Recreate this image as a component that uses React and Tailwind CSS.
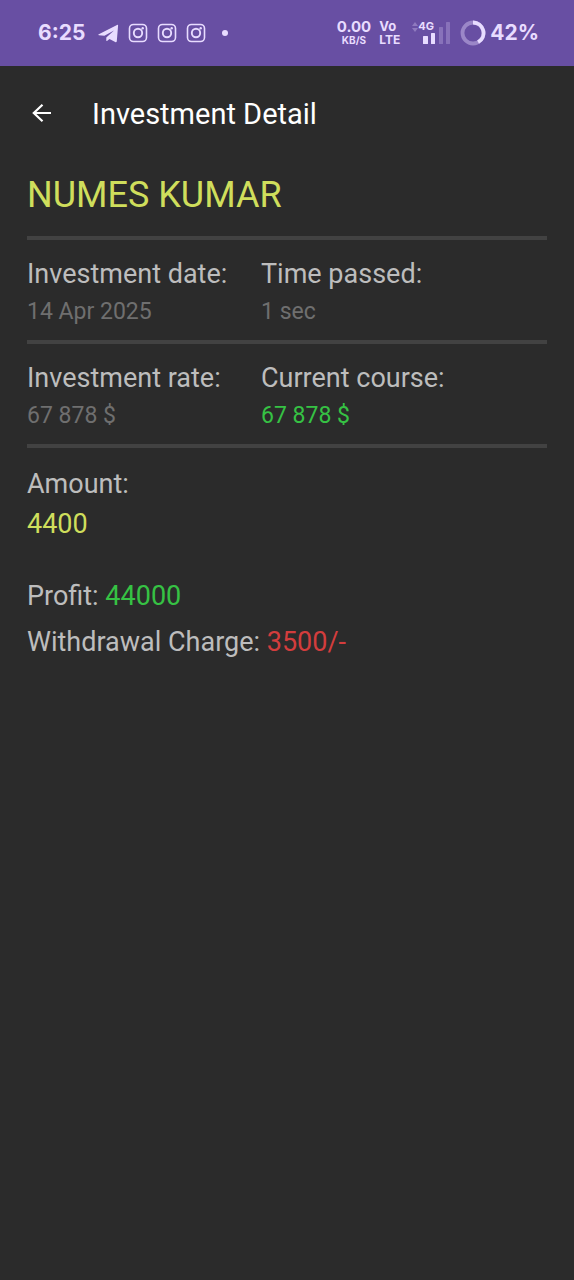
import clsx from 'clsx';

const investment = {
  name: 'NUMES KUMAR',
  amount: '4400',
  profit: '44000',
  charge: '3500/-',
};

const sections = [
  [
    { label: 'Investment date:', value: '14 Apr 2025', color: 'text-[#6f6f6f]' },
    { label: 'Time passed:', value: '1 sec', color: 'text-[#6f6f6f]' },
  ],
  [
    { label: 'Investment rate:', value: '67 878 $', color: 'text-[#6f6f6f]' },
    { label: 'Current course:', value: '67 878 $', color: 'text-[#36c244]' },
  ],
];

function TelegramIcon() {
  return (
    <svg viewBox="0 0 22 20" className="h-5 w-[22px]" fill="currentColor" aria-hidden="true">
      <path d="M1.800 11.300 20 1.900c.7-.3 1.100 0 1.100.7l-1.300 15.600c-.1 1-.8 1.300-1.600.9l-5.700-3-2.200 1.700c-.5.4-1 .2-1-.4v-2.800l7.700-7.200-9.600 5.400-5.500-.6c-.7-.1-.8-.6-.1-.9z" />
    </svg>
  );
}

function InstagramIcon() {
  return (
    <svg viewBox="0 0 20 20" className="size-5" fill="none" stroke="currentColor" strokeWidth="1.600" aria-hidden="true">
      <rect x="1.500" y="1.500" width="17" height="17" rx="4" />
      <circle cx="10" cy="10" r="4.200" strokeWidth="1.900" />
      <circle cx="14.700" cy="5.300" r="1.200" fill="currentColor" stroke="none" />
    </svg>
  );
}

function SignalBars() {
  return (
    <svg viewBox="0 0 30 24" className="h-6 w-[30px]" fill="currentColor" aria-hidden="true">
      <rect x="3" y="15" width="5" height="8" rx="0.500" />
      <rect x="11" y="12" width="4" height="11" rx="0.500" />
      <rect x="19" y="6" width="4" height="17" rx="0.500" opacity="0.25" />
      <rect x="26" y="1" width="4" height="22" rx="0.500" opacity="0.25" />
    </svg>
  );
}

function BatteryRing() {
  return (
    <svg viewBox="0 0 26 26" className="size-[26px]" fill="none" stroke="currentColor" strokeWidth="3.800" aria-hidden="true">
      <circle cx="13" cy="13" r="10.500" opacity="0.4" />
      <path d="M13 2.500a10.500 10.500 0 0 1 5.100 19.700" />
    </svg>
  );
}

function StatusBar() {
  return (
    <div className="flex h-[66px] items-center justify-between bg-[#684fa3] pr-[35px] pl-[38px] font-['Inter',sans-serif] font-bold text-[#e8dcff]">
      <div className="flex items-center">
        <span className="text-[21px] leading-6">6:25</span>
        <div className="ml-3 flex items-center gap-[9px]">
          <TelegramIcon />
          <InstagramIcon />
          <InstagramIcon />
          <InstagramIcon />
        </div>
        <span className="ml-4 size-1.5 rounded-full bg-[#e8dcff]" />
      </div>

      <div className="flex items-center">
        <div className="text-center">
          <p className="text-[15px] leading-[14px]">0.00</p>
          <p className="text-[10px] leading-3">KB/S</p>
        </div>
        <div className="ml-2">
          <p className="text-[13px] leading-[13px]">Vo</p>
          <p className="text-xs leading-[13px]">LTE</p>
        </div>
        <div className="relative ml-5">
          <SignalBars />
          <span className="absolute -top-px -left-0.5 text-[11px] leading-3">4G</span>
          <svg viewBox="0 0 6 10" className="absolute top-px -left-2 h-2.5 w-1.5 opacity-30" fill="currentColor" aria-hidden="true">
            <path d="M3 0l3 4H0zM3 10l3-4H0z" />
          </svg>
        </div>
        <div className="ml-2.5 flex items-center gap-1">
          <BatteryRing />
          <span className="text-[21px] leading-6">42%</span>
        </div>
      </div>
    </div>
  );
}

function Field({ label, value, color }) {
  return (
    <div>
      <dt className="text-[27px] leading-8">{label}</dt>
      <dd className={clsx('mt-2 text-[23px] leading-7', color)}>{value}</dd>
    </div>
  );
}

export default function App() {
  return (
    <div className="min-h-screen bg-[#2b2b2b] font-['Roboto',sans-serif] text-[#bdbdbd]">
      <StatusBar />

      <header className="flex items-center px-7 pt-8 text-white">
        <button type="button" aria-label="Back" className="flex w-16 pl-1">
          <svg viewBox="0 0 20 20" className="size-5" fill="none" stroke="currentColor" strokeWidth="2.200" aria-hidden="true">
            <path d="M19 9H2M10.500.800 1.800 9l8.700 8.200" />
          </svg>
        </button>
        <h1 className="text-[29px] leading-8">Investment Detail</h1>
      </header>

      <main className="px-[27px] pt-11">
        <h2 className="border-b-4 border-[#424242] pb-5 text-4xl leading-[42px] text-[#cfde5c]">{investment.name}</h2>

        {sections.map((fields) => (
          <dl key={fields[0].label} className="grid grid-cols-[45%_1fr] border-b-4 border-[#424242] pt-[18px] pb-3.5">
            {fields.map((field) => <Field key={field.label} {...field} />)}
          </dl>
        ))}

        <div className="pt-5 text-[27px] leading-8">
          <p>Amount:</p>
          <p className="mt-2 text-[#cfde5c]">{investment.amount}</p>
          <p className="mt-10">Profit: <span className="text-[#36c244]">{investment.profit}</span></p>
          <p className="mt-3.5">Withdrawal Charge: <span className="text-[#d33d3d]">{investment.charge}</span></p>
        </div>
      </main>
    </div>
  );
}
